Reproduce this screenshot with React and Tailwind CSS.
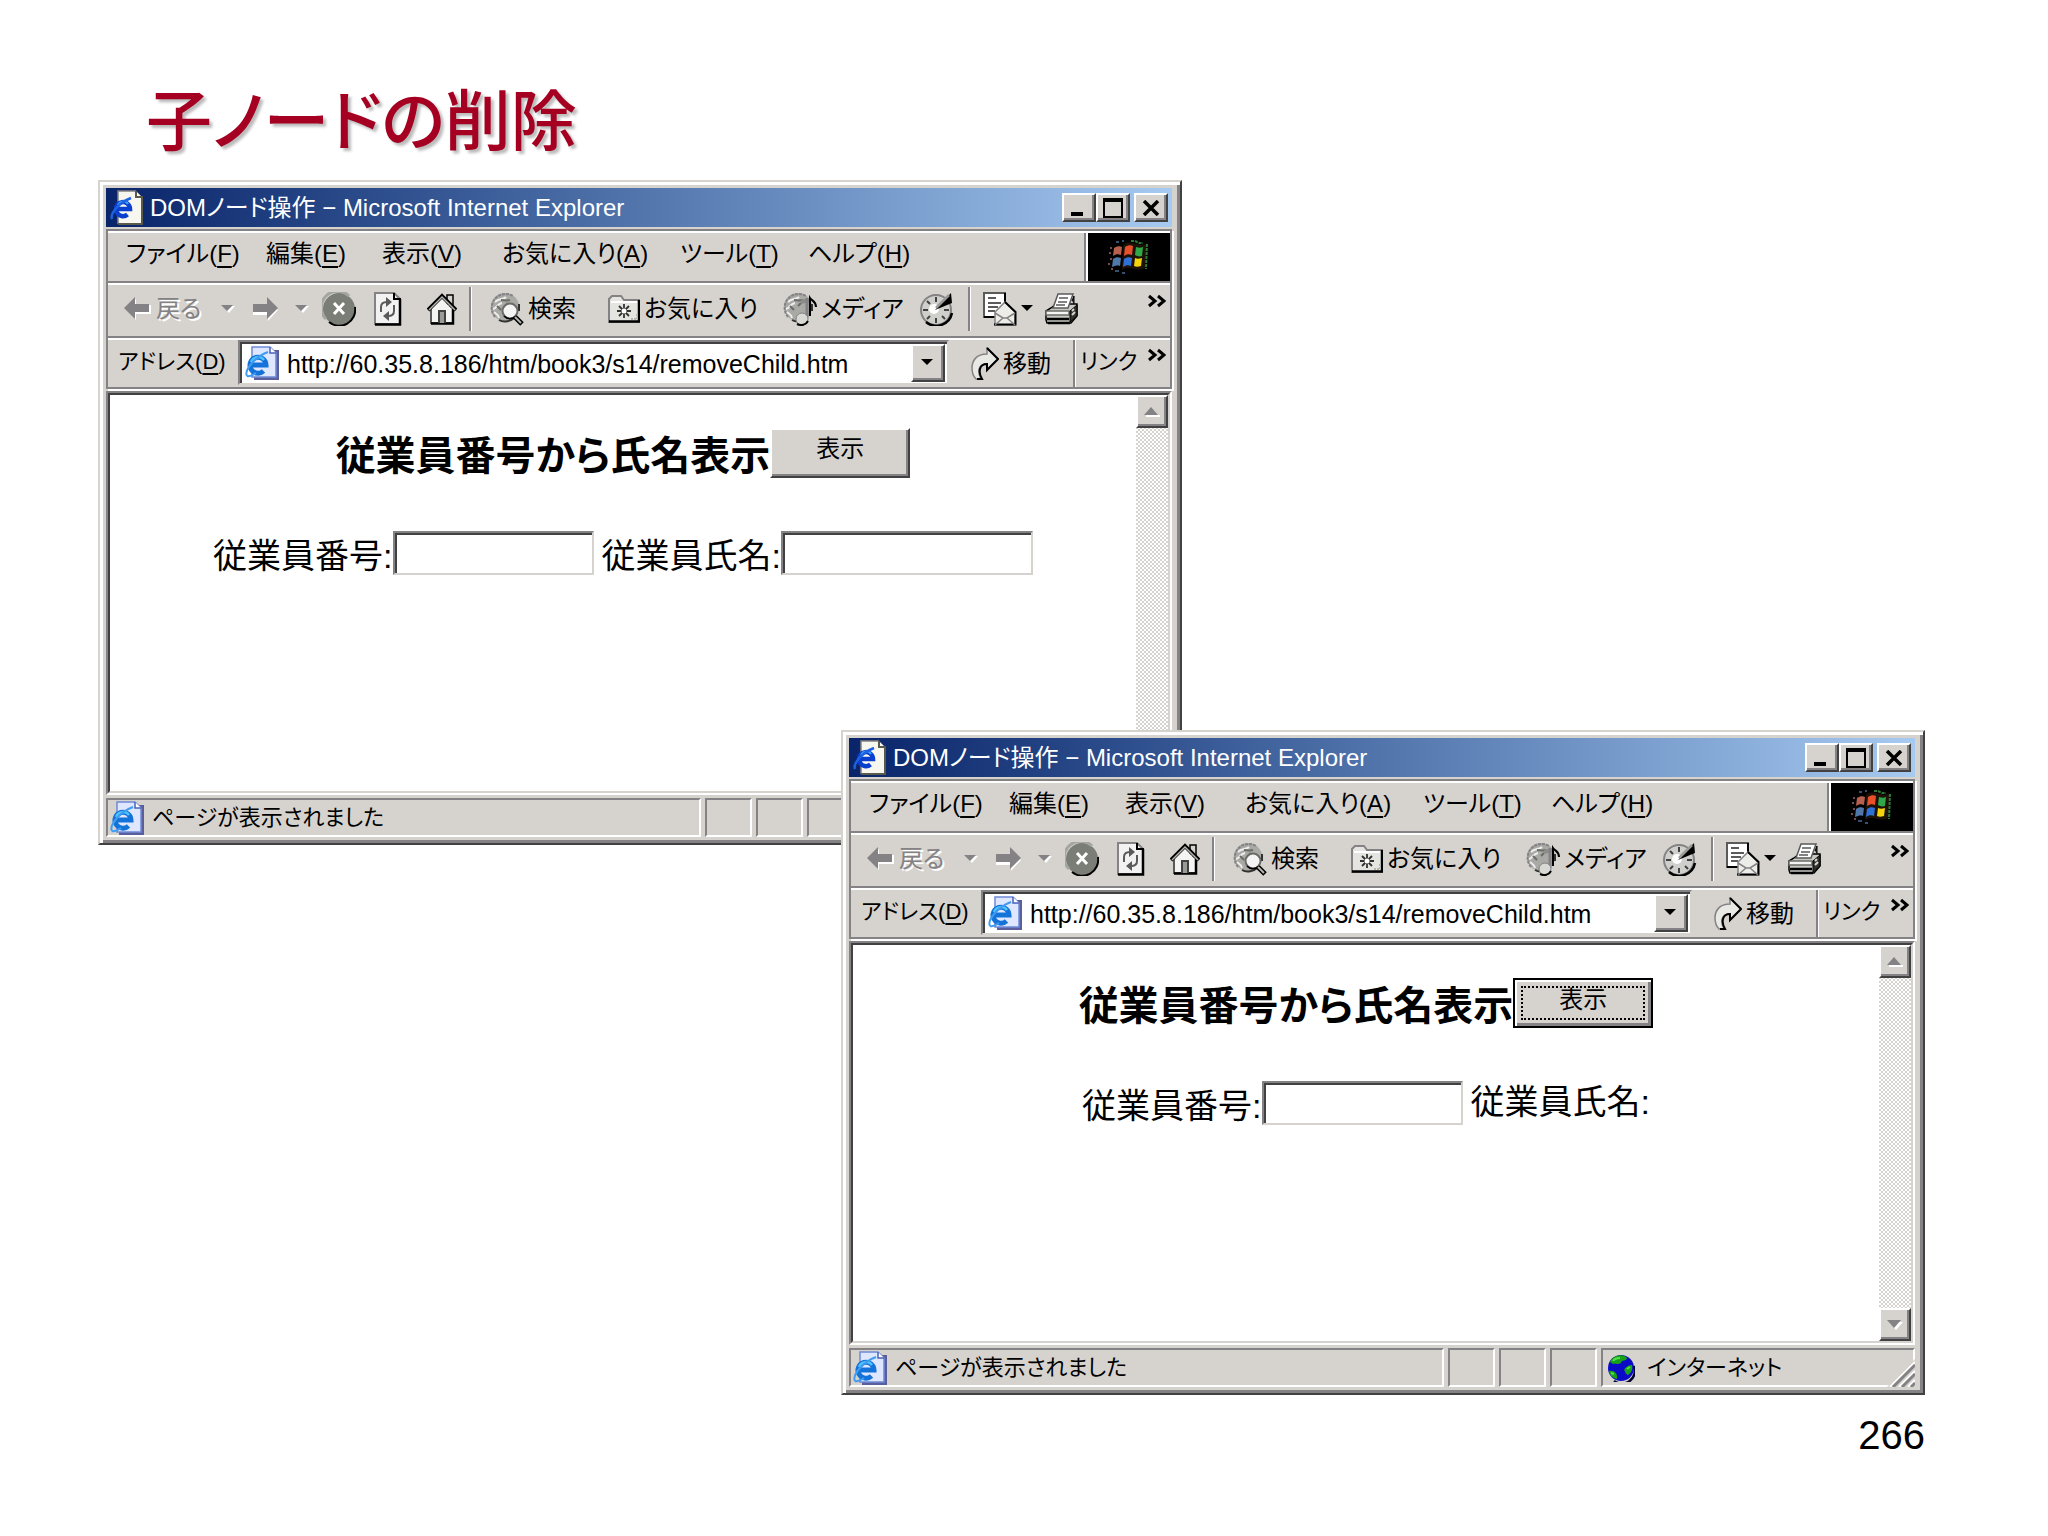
import { useState } from 'react';

const RAISED = 'border-2 border-t-white border-l-white border-r-[#424142] border-b-[#424142] shadow-[inset_-2px_-2px_#848284] bg-[#d6d3ce]';
const SUNKEN = 'border-2 border-t-[#848284] border-l-[#848284] border-r-[#d6d3ce] border-b-[#d6d3ce] shadow-[inset_2px_2px_#424142] bg-white';
const PANEL = 'border-2 border-t-[#848284] border-l-[#848284] border-r-white border-b-white';
const TOOL_BTN = 'flex items-center gap-1 shrink-0 whitespace-nowrap';
const SEP = 'w-[3px] h-[44px] shrink-0 bg-[#848284] border-r border-white';

const MENUS = [
  { label: 'ファイル', hotkey: 'F', width: 'w-[140px]' },
  { label: '編集', hotkey: 'E', width: 'w-[116px]' },
  { label: '表示', hotkey: 'V', width: 'w-[120px]' },
  { label: 'お気に入り', hotkey: 'A', width: 'w-[178px]' },
  { label: 'ツール', hotkey: 'T', width: 'w-[128px]' },
  { label: 'ヘルプ', hotkey: 'H', width: 'w-[100px]' },
];

function TitlePageIcon() {
  return (
    <svg width="34" height="36" viewBox="0 0 34 36" aria-hidden="true">
      <path d="M8 1h18l6 6v27H8z" fill="#f7f7ef" />
      <path d="M8 34V1h18" fill="none" stroke="#848284" strokeWidth="1.5" />
      <path d="M26 1v6h6v27H8" fill="none" stroke="#5a5a4a" strokeWidth="2" />
      <path d="M6 19h14a7 7 0 1 0-2.500 5.500" fill="none" stroke="#0a3fd0" strokeWidth="4.500" />
      <path d="M8 15c2-4 8-5 10-1" fill="none" stroke="#3fa0ff" strokeWidth="2" />
      <path d="M2 29C0 24 8 13 21 8" fill="none" stroke="#1d62e0" strokeWidth="2.500" />
    </svg>
  );
}

function PageIcon() {
  return (
    <svg className="shrink-0" width="34" height="34" viewBox="0 0 34 34" aria-hidden="true">
      <path d="M13 4h21v30H9v-4z" fill="#5a5f9c" />
      <path d="M7 1h18l6 6v24H7z" fill="#dfe6ff" stroke="#6f8ad8" strokeWidth="1.500" />
      <path d="M25 1v6h6" fill="#fff" stroke="#4a62b8" strokeWidth="1.500" />
      <path d="M6 19h15a8 8 0 1 0-2.500 6" fill="none" stroke="#1473d8" strokeWidth="5" />
      <path d="M6 16c2-5 9-7 13-2" fill="none" stroke="#4fc3ff" strokeWidth="2.500" />
      <path d="M2 30C-1 25 9 11 23 6" fill="none" stroke="#3f9cf0" strokeWidth="2" />
      <path d="M2 30c3 1 6-1 9-3" fill="none" stroke="#3f9cf0" strokeWidth="2" />
    </svg>
  );
}

function WindowsFlag() {
  return (
    <svg width="44" height="40" viewBox="0 0 44 40" aria-hidden="true">
      <path d="M16 8c5-4 10-2 14-1s7 1 10-1l-2 25c-4 2-7 2-11 1s-8-2-12 1z" fill="#1c1208" />
      <path d="M18 10c3-2 6-2 8-1l-1 9c-3-1-5-1-8 1z" fill="#e8502c" />
      <path d="M29 10c3 1 5 1 7 0l-1 9c-3 1-5 0-7-1z" fill="#2fa84a" />
      <path d="M17 22c3-2 5-2 8-1l-1 8c-3-1-5-1-8 1z" fill="#2f6fd8" />
      <path d="M28 21c2 1 4 1 7 0l-1 8c-3 1-5 1-7 0z" fill="#f5d30c" />
      <path d="M7 11c3-2 6-2 8-1l-1 8c-3-1-5-1-8 1z" fill="#b8604f" />
      <path d="M6 22c3-2 5-2 8-1l-1 8c-3-1-5 0-8 1z" fill="#4f78a8" />
      <path d="M3 11h2M2 16h2M3 22h2M1 27h2M4 32h2" stroke="#7a4a50" strokeWidth="2" />
      <path d="M9 5h3M15 4h2M8 34h4M15 36h3" stroke="#38506f" strokeWidth="2" />
      <path d="M24 4h4l4 2h4M40 7l-1 25" fill="none" stroke="#2d7a38" strokeWidth="2" strokeDasharray="3 1" />
    </svg>
  );
}

function ArrowIcon({ back }) {
  return (
    <svg width="28" height="24" viewBox="0 0 28 24" aria-hidden="true">
      <g transform={back ? undefined : 'translate(27 0) scale(-1 1)'}>
        <path d={back ? 'M2 12L12 2v6h15v9H12v6z' : 'M0 13L10 3v6h15v9H10v6z'} fill="#fff" />
        <path d="M0 11L11 0v7h14v8H11v7z" fill="#848284" />
      </g>
    </svg>
  );
}

function Caret({ disabled }) {
  return (
    <svg width="14" height="10" viewBox="0 0 14 10" aria-hidden="true">
      {disabled && <path d="M2 2h12L8 9z" fill="#fff" />}
      <path d="M0 1h12L6 7z" fill={disabled ? '#848284' : '#000'} />
    </svg>
  );
}

function StopIcon() {
  return (
    <svg width="34" height="34" viewBox="0 0 34 34" aria-hidden="true">
      <circle cx="17" cy="17" r="16" fill="#7b7d77" />
      <path d="M7 30a16 16 0 0 0 26-15" fill="none" stroke="#000" strokeWidth="2" />
      <path d="M4 27A16 16 0 0 1 27 4" fill="none" stroke="#a5a6a0" strokeWidth="3" />
      <path d="M12 11l10 11M22 11L12 22" stroke="#fff" strokeWidth="3" />
    </svg>
  );
}

function RefreshIcon() {
  return (
    <svg width="28" height="34" viewBox="0 0 28 34" aria-hidden="true">
      <path d="M1 1h19l6 6v25H1z" fill="#f2f2f2" stroke="#848284" strokeWidth="2" />
      <path d="M26 7v25.500H1" fill="none" stroke="#000" strokeWidth="2.500" />
      <path d="M20 1v6h7" fill="none" stroke="#000" strokeWidth="2" />
      <path d="M7 20v-5q0-5 6-5M20 13v6q0 5-6 5" fill="none" stroke="#5a5a5a" strokeWidth="2" />
      <path d="M12 5l6 5-6 5zM15 19l-6 5 6 5z" fill="#5a5a5a" />
    </svg>
  );
}

function HomeIcon() {
  return (
    <svg width="30" height="32" viewBox="0 0 30 32" aria-hidden="true">
      <path d="M20 2h6v12h-6z" fill="#d6d3ce" stroke="#000" strokeWidth="1.500" />
      <path d="M4 17L15 6l11 11v13H4z" fill="#f4f4f2" />
      <path d="M4 16v14h22" fill="none" stroke="#5a5a5a" strokeWidth="2" />
      <path d="M26 16v14.500H4" fill="none" stroke="#000" strokeWidth="2.500" />
      <path d="M1 17L15 3l14 14" fill="none" stroke="#000" strokeWidth="4" />
      <path d="M2 17L15 4l13 13" fill="none" stroke="#b5b5b0" strokeWidth="1.500" />
      <path d="M12 30V18h6v12" fill="#9a9a96" stroke="#424142" strokeWidth="2" />
    </svg>
  );
}

function Globe() {
  return (
    <>
      <circle cx="15" cy="15" r="14" fill="#a9a9a5" />
      <path d="M5 25A14 14 0 0 1 23 4" fill="none" stroke="#848284" strokeWidth="2" strokeDasharray="3 1" />
      <path d="M5 10c4-4 8-2 11-5M3 17c4-1 4-5 9-6M9 26c-1-4-4-5-5-6" fill="none" stroke="#eee" strokeWidth="2" />
      <path d="M11 8c3 0 6 1 9 0M7 14l4 4M15 14l3-3" fill="none" stroke="#6b6b67" strokeWidth="2" />
      <path d="M9 28c5 3 12 1 15-2M29 12v7" fill="none" stroke="#31312f" strokeWidth="2" />
    </>
  );
}

function SearchIcon() {
  return (
    <svg width="34" height="34" viewBox="0 0 34 34" aria-hidden="true">
      <Globe />
      <circle cx="20" cy="19" r="7.500" fill="#f4f4f4" stroke="#6b6b67" strokeWidth="2" />
      <path d="M14 24a8 8 0 0 0 12 0" fill="none" stroke="#000" strokeWidth="1.500" />
      <path d="M25 25l7 7" stroke="#000" strokeWidth="5" />
      <path d="M25 25l6 6" stroke="#b5b5b1" strokeWidth="2" />
    </svg>
  );
}

function FavoritesIcon() {
  return (
    <svg width="32" height="28" viewBox="0 0 32 28" aria-hidden="true">
      <path d="M1 27V4l3-3h9l3 4h15v22z" fill="#e4e4e0" stroke="#848284" strokeWidth="2" />
      <path d="M31 5v21.500H1" fill="none" stroke="#000" strokeWidth="2.500" />
      <path d="M3 7h26" stroke="#fff" strokeWidth="2" />
      <path d="M16 9v14M9 16h14M11 11l10 10M21 11L11 21" stroke="#31312f" strokeWidth="1.800" />
      <circle cx="16" cy="16" r="2.500" fill="#fff" />
      <path d="M23 24h6v-6" fill="none" stroke="#b5b5b1" strokeWidth="2" strokeDasharray="2 1" />
    </svg>
  );
}

function MediaIcon() {
  return (
    <svg width="34" height="34" viewBox="0 0 34 34" aria-hidden="true">
      <Globe />
      <path d="M18 8l9-2v4l-9 2z" fill="#8c8c88" />
      <path d="M27 24V6c2 3 6 3 6 9" fill="none" stroke="#000" strokeWidth="2" />
      <path d="M24 26V6" stroke="#848284" strokeWidth="3" />
      <circle cx="19" cy="27" r="6" fill="#d8d8d4" stroke="#848284" />
      <path d="M14 32c4 2 9 1 11-3" fill="none" stroke="#000" strokeWidth="2" />
    </svg>
  );
}

function HistoryIcon() {
  return (
    <svg width="34" height="34" viewBox="0 0 34 34" aria-hidden="true">
      <circle cx="16" cy="18" r="15" fill="#cfcfcb" stroke="#848284" strokeWidth="2" />
      <path d="M6 30a16 16 0 0 0 26-9" fill="none" stroke="#000" strokeWidth="2.500" />
      <path d="M16 5v5M16 26v5M3 18h5M24 18h5M7 9l3 3M7 27l3-3M25 27l-3-3" stroke="#424142" strokeWidth="2" />
      <circle cx="14" cy="17" r="5" fill="#fff" />
      <path d="M15 18L31 1l1 10z" fill="#000" />
      <path d="M16 16L29 3" stroke="#9a9a96" strokeWidth="2.500" />
    </svg>
  );
}

function MailIcon() {
  return (
    <svg width="34" height="34" viewBox="0 0 34 34" aria-hidden="true">
      <path d="M1 1h21v24H1z" fill="#fff" stroke="#5a5a5a" strokeWidth="2" />
      <path d="M22 1v12M1 25h11" stroke="#000" strokeWidth="2" />
      <path d="M5 6h8M5 11h13M5 15h10M5 19h7" stroke="#5a5a5a" strokeWidth="2" />
      <path d="M12 20L22 10l10 10v13H12z" fill="#ecece8" stroke="#848284" strokeWidth="1.500" />
      <path d="M22 10l10.500 10v12.500H11" fill="none" stroke="#000" strokeWidth="2" />
      <path d="M12 21l8 5h4l8-5M12 33l8-7M32 33l-8-7" fill="none" stroke="#848284" strokeWidth="1.500" />
    </svg>
  );
}

function PrintIcon() {
  return (
    <svg width="34" height="32" viewBox="0 0 34 32" aria-hidden="true">
      <path d="M6 15l5-4h21v12l-6 7H2l-1-3v-9z" fill="#c9c9c4" stroke="#000" strokeWidth="1.500" />
      <path d="M8 15L13 1h15l-5 14z" fill="#fff" stroke="#5a5a5a" strokeWidth="1.500" />
      <path d="M14 5h9M13 9h9M11 12h9" stroke="#5a5a5a" strokeWidth="1.500" />
      <path d="M1 18h23v4H1z" fill="#f4f4f2" stroke="#6b6b67" strokeWidth="1.500" />
      <path d="M2 26h22M3 30h22" stroke="#000" strokeWidth="2.500" />
      <path d="M25 29V18l7-6v11zM27 8l2-5v8" fill="#31312f" stroke="#000" />
      <path d="M27 18l2-2M27 22l3-3" stroke="#d6d3ce" strokeWidth="2" />
    </svg>
  );
}

function GoIcon() {
  return (
    <svg width="28" height="34" viewBox="0 0 28 34" aria-hidden="true">
      <path d="M16 1v6C5 7 1 14 1 21c0 6 2 9 4 11h5C6 25 7 17 16 17v6l11-11z" fill="#e8e8e4" stroke="#848284" strokeWidth="1.500" />
      <path d="M16 1l11 11-11 11v-6C8 17 7 25 11 32H6" fill="none" stroke="#000" strokeWidth="2" />
    </svg>
  );
}

function Chevrons() {
  return (
    <svg width="18" height="14" viewBox="0 0 18 14" aria-hidden="true">
      <path d="M1 2l6 5-6 5M10 2l6 5-6 5" fill="none" stroke="#000" strokeWidth="3" />
    </svg>
  );
}

function InternetIcon() {
  return (
    <svg width="28" height="28" viewBox="0 0 28 28" aria-hidden="true">
      <circle cx="14" cy="14" r="13" fill="#0a0ac8" />
      <path d="M7 27a13 13 0 0 0 20-15" fill="none" stroke="#000030" strokeWidth="2.500" />
      <path d="M3 8c4-8 14-8 17-4-1 4-5 1-6 5-4 2-6 0-8 1zM17 16c2-4 6-5 8-5 1 5-1 8-4 10-3-1-2-3-4-5zM2 17c5-1 9 2 8 8-5-1-7-4-8-8z" fill="#18a018" />
      <path d="M6 7c2-3 5-3 7-3M20 15l3-2M4 19l3 1" fill="none" stroke="#50e050" strokeWidth="2" />
    </svg>
  );
}

function Hotkey({ label, hotkey }) {
  return (
    <>
      {label}(<span className="underline decoration-2 underline-offset-4">{hotkey}</span>)
    </>
  );
}

function CaptionButtons() {
  return (
    <div className="flex items-center mr-1">
      <button aria-label="最小化" className={`${RAISED} w-[34px] h-[29px] flex items-end pl-[7px] pb-1`}>
        <span className="w-3 h-1 bg-black" />
      </button>
      <button aria-label="最大化" className={`${RAISED} w-[34px] h-[29px] flex items-center justify-center`}>
        <span className="w-5 h-5 border-2 border-t-4 border-black" />
      </button>
      <button aria-label="閉じる" className={`${RAISED} w-[34px] h-[29px] ml-1 flex items-center justify-center`}>
        <svg width="18" height="16" viewBox="0 0 18 16" aria-hidden="true">
          <path d="M2 1l14 14M16 1L2 15" stroke="#000" strokeWidth="3.500" />
        </svg>
      </button>
    </div>
  );
}

function MenuBar() {
  return (
    <div className="flex h-[52px] border-t-2 border-t-white border-b-2 border-b-[#848284]">
      <nav className="flex flex-1 items-center pl-[18px] pb-[6px] border-r-2 border-[#848284]">
        {MENUS.map((m) => (
          <button key={m.hotkey} className={`${m.width} text-left whitespace-nowrap`}>
            <Hotkey label={m.label} hotkey={m.hotkey} />
          </button>
        ))}
      </nav>
      <div className="w-[84px] border-l-2 border-white bg-black flex items-center justify-center">
        <WindowsFlag />
      </div>
    </div>
  );
}

function ToolBar() {
  return (
    <div className="flex items-center h-[55px] pb-1 border-t-2 border-t-white border-b-2 border-b-[#848284]">
      <button className={`${TOOL_BTN} w-[105px] pl-4 text-[#848284] [text-shadow:2px_2px_#fff]`}>
        <ArrowIcon back />
        戻る
      </button>
      <button aria-label="戻る履歴" className={`${TOOL_BTN} w-[30px] justify-center`}><Caret disabled /></button>
      <button aria-label="進む" className={`${TOOL_BTN} w-[44px] justify-center`}><ArrowIcon /></button>
      <button aria-label="進む履歴" className={`${TOOL_BTN} w-[30px] justify-center`}><Caret disabled /></button>
      <button aria-label="中止" className={`${TOOL_BTN} w-[44px] justify-center`}><StopIcon /></button>
      <button aria-label="更新" className={`${TOOL_BTN} w-[54px] justify-center`}><RefreshIcon /></button>
      <button aria-label="ホーム" className={`${TOOL_BTN} w-[54px] justify-center`}><HomeIcon /></button>
      <div className={SEP} />
      <div className="flex items-center pl-[18px]">
        <button className={`${TOOL_BTN} w-[118px]`}><SearchIcon />検索</button>
        <button className={`${TOOL_BTN} w-[175px]`}><FavoritesIcon />お気に入り</button>
        <button className={`${TOOL_BTN} w-[137px]`}><MediaIcon />メディア</button>
        <button aria-label="履歴" className={`${TOOL_BTN} w-[48px]`}><HistoryIcon /></button>
      </div>
      <div className={SEP} />
      <div className="flex items-center pl-3">
        <button aria-label="メール" className={`${TOOL_BTN} w-[62px]`}><MailIcon /><Caret /></button>
        <button aria-label="印刷" className={TOOL_BTN}><PrintIcon /></button>
      </div>
      <button aria-label="その他のボタン" className="ml-auto mr-1 mb-4"><Chevrons /></button>
    </div>
  );
}

function AddressBar({ id }) {
  const [url, setUrl] = useState('http://60.35.8.186/htm/book3/s14/removeChild.htm');
  return (
    <div className="flex h-[49px] border-t-2 border-t-white">
      <label htmlFor={id} className="w-[130px] shrink-0 pl-[10px] pt-[6px] text-[22px] whitespace-nowrap">
        <Hotkey label="アドレス" hotkey="D" />
      </label>
      <div className={`${SUNKEN} flex flex-1 min-w-0 items-center h-[45px] pl-[5px] pr-[2px]`}>
        <PageIcon />
        <input id={id} value={url} onChange={(e) => setUrl(e.target.value)} className="flex-1 min-w-0 pl-2 pt-[2px] text-[25px] bg-transparent outline-none" />
        <button aria-label="アドレス一覧" className={`${RAISED} w-[34px] h-[38px] flex items-center justify-center`}>
          <Caret />
        </button>
      </div>
      <button className={`${TOOL_BTN} w-[124px] pl-[22px]`}><GoIcon />移動</button>
      <div className="w-[3px] bg-[#848284] border-r border-white" />
      <div className="flex w-[94px] pl-1 pr-1 pt-[6px] justify-between whitespace-nowrap text-[22px]">
        リンク
        <button aria-label="その他のリンク" className="self-start pt-[2px]"><Chevrons /></button>
      </div>
    </div>
  );
}

function ScrollBar() {
  return (
    <div className="flex flex-col justify-between w-8 shrink-0 bg-[repeating-conic-gradient(#fff_0_25%,#d6d3ce_0_50%)] bg-[length:4px_4px]">
      <button aria-label="上へ" className={`${RAISED} h-[33px] flex items-center justify-center`}>
        <svg width="16" height="12" viewBox="0 0 16 12" aria-hidden="true">
          <path d="M2 9h14v2H2z" fill="#fff" />
          <path d="M0 9l7-8 7 8z" fill="#848284" />
        </svg>
      </button>
      <button aria-label="下へ" className={`${RAISED} h-[33px] flex items-center justify-center`}>
        <svg width="16" height="12" viewBox="0 0 16 12" aria-hidden="true">
          <path d="M2 3h14l-7 8z" fill="#fff" />
          <path d="M0 1h14L7 9z" fill="#848284" />
        </svg>
      </button>
    </div>
  );
}

function StatusBar({ zone }) {
  return (
    <footer className="relative flex gap-1 h-[39px] mt-[3px] text-[22px]">
      <div className={`${PANEL} flex flex-1 items-center gap-2 pl-[2px]`}>
        <PageIcon />
        ページが表示されました
      </div>
      <div className={`${PANEL} w-[47px]`} />
      <div className={`${PANEL} w-[47px]`} />
      <div className={`${PANEL} w-[47px]`} />
      <div className={`${PANEL} flex items-center gap-3 w-[314px] pl-1`}>
        {zone && <InternetIcon />}
        {zone}
      </div>
      <svg className="absolute right-0 bottom-0" width="28" height="28" viewBox="0 0 28 28" aria-hidden="true">
        <path d="M28 0L0 28h28z" fill="#d6d3ce" />
        <path d="M3 28L28 3M12 28l16-16M21 28l7-7" stroke="#fff" strokeWidth="2" />
        <path d="M6 28L28 6M15 28l13-13M24 28l4-4" stroke="#848284" strokeWidth="3" />
      </svg>
    </footer>
  );
}

function BrowserWindow({ id, removed, zone, className }) {
  return (
    <section className={`absolute flex flex-col w-[1084px] h-[665px] border-2 border-t-[#d6d3ce] border-l-[#d6d3ce] border-r-[#424142] border-b-[#424142] bg-[#d6d3ce] shadow-[inset_3px_3px_#fff,inset_-3px_-3px_#848284] p-[6px] pr-2 text-2xl leading-8 ${className}`}>
      <header className="flex items-center h-[39px] shrink-0 pl-1 bg-linear-to-r from-[#0a246a] to-[#a6caf0] text-white">
        <TitlePageIcon />
        <span className="flex-1 pl-[6px]">DOMノード操作 − Microsoft Internet Explorer</span>
        <CaptionButtons />
      </header>

      <div className="mt-[2px] shrink-0 border-2 border-[#848284] shadow-[2px_2px_#fff]">
        <MenuBar />
        <ToolBar />
        <AddressBar id={`${id}-url`} />
      </div>

      <div className="flex flex-1 mt-[2px] border-2 border-t-[#848284] border-l-[#848284] border-r-white border-b-white">
        <div className="flex flex-1 border-2 border-t-[#424142] border-l-[#424142] border-r-[#d6d3ce] border-b-[#d6d3ce] bg-white">
          <div className="flex-1 flex flex-col items-center pt-[30px]">
            <div className="flex items-center">
              <h2 className="text-[40px] leading-[50px] font-bold pt-[6px]">従業員番号から氏名表示</h2>
              {removed ? (
                <button className="w-[140px] h-[50px] border-2 border-black bg-[#d6d3ce] shadow-[inset_2px_2px_#fff,inset_-3px_-3px_#848284] p-[6px] outline-none">
                  <span className="block h-[34px] leading-6 border-2 border-dotted border-black">表示</span>
                </button>
              ) : (
                <button className={`${RAISED} w-[140px] h-[50px] pb-2`}>表示</button>
              )}
            </div>
            <div className="flex mt-[50px] h-11 text-[34px] leading-[50px] whitespace-nowrap">
              <label htmlFor={`${id}-no`}>従業員番号:</label>
              <input id={`${id}-no`} className={`${SUNKEN} w-[201px] mr-2 outline-none`} />
              {removed ? (
                <span className="leading-[42px]">従業員氏名:</span>
              ) : (
                <>
                  <label htmlFor={`${id}-name`}>従業員氏名:</label>
                  <input id={`${id}-name`} className={`${SUNKEN} w-[252px] outline-none`} />
                </>
              )}
            </div>
          </div>
          <ScrollBar />
        </div>
      </div>

      <StatusBar zone={zone} />
    </section>
  );
}

export default function App() {
  return (
    <main className="relative flex flex-col justify-between min-h-screen bg-white text-black font-['Liberation_Sans','Noto_Sans_CJK_JP',sans-serif] [font-feature-settings:'palt']">
      <h1 className="pl-[146px] pt-[78px] text-[66px] leading-[88px] font-medium text-[#a50021] [text-shadow:3px_3px_3px_#bbb]">子ノードの削除</h1>
      <BrowserWindow id="before" className="left-[98px] top-[180px]" />
      <BrowserWindow id="after" removed zone="インターネット" className="left-[841px] top-[730px]" />
      <p className="self-end pr-[123px] pb-[76px] text-[40px] leading-[50px]">266</p>
    </main>
  );
}
